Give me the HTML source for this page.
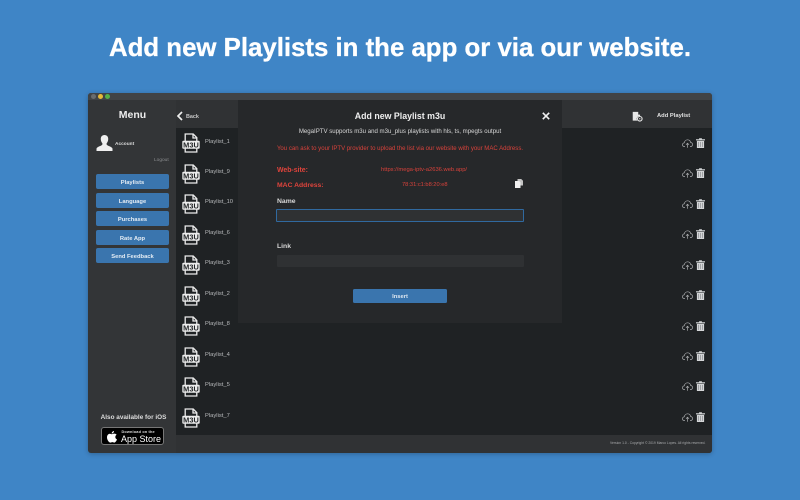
<!DOCTYPE html>
<html><head><meta charset="utf-8">
<style>
html,body{margin:0;padding:0}
body{width:800px;height:500px;overflow:hidden;background:#3f85c6;position:relative;font-family:"Liberation Sans",sans-serif;color:#e6e6e6}
div,svg{position:absolute}
.t{white-space:nowrap;line-height:1}
.btn{left:96px;width:73px;height:15px;background:#3a75ae;border-radius:2px;color:#e4ecf4;font-size:5.800px;font-weight:bold;text-align:center;line-height:18px}
.pl{left:205px;font-size:5.800px;color:#b8babc;white-space:nowrap;line-height:1}
</style></head><body>
<svg width="0" height="0" style="position:absolute"><defs>
<symbol id="m3u" viewBox="0 0 18 20"><path d="M3.200 8V1h8l3.600 3.600V8M11 1v4h3.800M3.200 15.500V19h11.600v-3.500" fill="none" stroke="#ececec" stroke-width="1.300"/><rect x="0.300" y="7.800" width="17.400" height="8" rx="1" fill="#ececec"/><text x="1.200" y="14.500" font-family="Liberation Sans" font-size="7" font-weight="bold" textLength="15.600" lengthAdjust="spacingAndGlyphs" fill="#1f2224">M3U</text></symbol>
<symbol id="cloud" viewBox="0 0 11 9"><path d="M3 7.500H2.400C1.200 7.500.5 6.600.5 5.600c0-1 .8-1.800 1.800-1.800C2.600 2 4 .8 5.600.8c1.600 0 2.800 1.100 3 2.700 1 .1 1.900.9 1.900 2 0 1.100-.8 2-2 2H8" fill="none" stroke="#aeb0b2" stroke-width=".7"/><path d="M5.500 8.800V4.300M4 5.700l1.500-1.500L7 5.700" fill="none" stroke="#aeb0b2" stroke-width=".7"/></symbol>
<symbol id="trash" viewBox="0 0 9 10"><path d="M0 1.300h9v1.100H0zM3.100 1.300V.2h2.800v1.100z" fill="#d4d6d8"/><path d="M.9 2.900h7.200V10H.9z" fill="#d4d6d8"/><path d="M2.600 3.900v5M4.500 3.900v5M6.400 3.900v5" stroke="#6a6d70" stroke-width=".5"/></symbol>
</defs></svg>

<div class="t" style="left:0;width:800px;top:36px;text-align:center;font-size:25.800px;font-weight:bold;color:#fff;-webkit-text-stroke:.3px #fff">Add new Playlists in the app or via our website.</div>

<!-- window -->
<div style="left:88px;top:93px;width:624px;height:360px;background:#333537;border-radius:3px;overflow:hidden;box-shadow:0 1px 5px rgba(0,0,0,.25)">
  <div style="left:0;top:0;width:624px;height:7px;background:#414345"></div>
  <div style="left:2.500px;top:1px;width:5px;height:5px;border-radius:50%;background:#6a6c6e"></div>
  <div style="left:9.500px;top:1px;width:5px;height:5px;border-radius:50%;background:#e6b93a"></div>
  <div style="left:17.200px;top:1px;width:5px;height:5px;border-radius:50%;background:#55b048"></div>
  <div style="left:88px;top:7px;width:536px;height:28px;background:#303234"></div>
  <div style="left:88px;top:35px;width:536px;height:307px;background:#1f2224"></div>
  <div style="left:88px;top:342px;width:536px;height:18px;background:#303234"></div>
</div>

<div class="t" style="left:96px;width:73px;top:110px;text-align:center;font-size:10.500px;font-weight:bold;color:#eee">Menu</div>

<svg style="left:96px;top:135px" width="17" height="16" viewBox="0 0 17 16"><path d="M8.500 0C6 0 4.600 1.800 4.800 4.400c.1 1.700.8 3 1.500 3.900.3.600.2 1.400-.4 1.800C4 11.300 1 11.900.5 13.600V16h16v-2.400c-.5-1.700-3.500-2.300-5.400-3.500-.6-.4-.7-1.200-.4-1.800.7-.9 1.400-2.200 1.500-3.900C12.400 1.800 11 0 8.500 0z" fill="#f0f0f0"/></svg>
<div class="t" style="left:115px;top:142.500px;font-size:4.800px;font-weight:bold;color:#ddd">Account</div>
<div class="t" style="left:154px;top:159px;font-size:4.800px;color:#8b8d8f">Logout</div>

<div class="btn" style="top:174px">Playlists</div>
<div class="btn" style="top:192.500px">Language</div>
<div class="btn" style="top:211px">Purchases</div>
<div class="btn" style="top:229.500px">Rate App</div>
<div class="btn" style="top:248px">Send Feedback</div>

<div class="t" style="left:96px;width:75px;top:415px;text-align:center;font-size:6.400px;font-weight:bold;color:#ddd">Also available for iOS</div>
<div style="left:101px;top:427px;width:63px;height:18px;box-sizing:border-box;background:#000;border:.5px solid #777;border-radius:3px"></div>
<svg style="left:107px;top:430.500px" width="10" height="12" viewBox="0 0 10 12"><path d="M7 0c.1 1.300-1.100 2.600-2.300 2.500C4.600 1.300 5.800.1 7 0zM4.800 3.200c.6 0 1.300-.6 2.500-.6.800 0 1.800.4 2.300 1.200-1.900 1.200-1.600 3.800.4 4.600-.5 1.400-1.600 3.200-2.700 3.200-.7 0-1-.5-1.900-.5s-1.300.5-2 .5C2 11.600 0 9 0 6.400c0-2.300 1.400-3.700 2.800-3.700.9 0 1.500.5 2 .5z" fill="#fff"/></svg>
<div class="t" style="left:121.500px;top:430.500px;font-size:3.800px;font-weight:bold;color:#ddd;letter-spacing:.18px">Download on the</div>
<div class="t" style="left:121px;top:435px;font-size:9px;color:#fff">App Store</div>

<!-- header -->
<svg style="left:176px;top:111px" width="8" height="10" viewBox="0 0 8 10"><path d="M6 1L2 5l4 4" fill="none" stroke="#eee" stroke-width="1.700"/></svg>
<div class="t" style="left:186px;top:114.500px;font-size:5.400px;font-weight:bold;color:#c8c8c8">Back</div>

<svg style="left:631.500px;top:110.500px" width="11" height="11" viewBox="0 0 12 12"><path d="M.8 1h6v3h2v1.500a3 3 0 00-2.800 5H.8z" fill="#e8e8e8"/><circle cx="8.500" cy="8.500" r="2.500" fill="none" stroke="#e8e8e8" stroke-width="1.200"/><circle cx="8.500" cy="8.500" r=".7" fill="#e8e8e8"/></svg>
<div class="t" style="left:657px;top:113.500px;font-size:5.800px;font-weight:bold;color:#e0e0e0">Add Playlist</div>

<!-- playlist rows -->
<svg style="left:182px;top:133px" width="18" height="20"><use href="#m3u"/></svg>
<svg style="left:182px;top:164px" width="18" height="20"><use href="#m3u"/></svg>
<svg style="left:182px;top:194px" width="18" height="20"><use href="#m3u"/></svg>
<svg style="left:182px;top:225px" width="18" height="20"><use href="#m3u"/></svg>
<svg style="left:182px;top:255px" width="18" height="20"><use href="#m3u"/></svg>
<svg style="left:182px;top:286px" width="18" height="20"><use href="#m3u"/></svg>
<svg style="left:182px;top:316px" width="18" height="20"><use href="#m3u"/></svg>
<svg style="left:182px;top:347px" width="18" height="20"><use href="#m3u"/></svg>
<svg style="left:182px;top:377px" width="18" height="20"><use href="#m3u"/></svg>
<svg style="left:182px;top:408px" width="18" height="20"><use href="#m3u"/></svg>

<div class="pl" style="top:139.500px">Playlist_1</div>
<div class="pl" style="top:170px">Playlist_9</div>
<div class="pl" style="top:200.400px">Playlist_10</div>
<div class="pl" style="top:230.800px">Playlist_6</div>
<div class="pl" style="top:261.300px">Playlist_3</div>
<div class="pl" style="top:291.700px">Playlist_2</div>
<div class="pl" style="top:322.100px">Playlist_8</div>
<div class="pl" style="top:352.600px">Playlist_4</div>
<div class="pl" style="top:383px">Playlist_5</div>
<div class="pl" style="top:413.500px">Playlist_7</div>

<svg style="left:682px;top:138.500px" width="11" height="9"><use href="#cloud"/></svg><svg style="left:696px;top:138px" width="9" height="10"><use href="#trash"/></svg>
<svg style="left:682px;top:168.500px" width="11" height="9"><use href="#cloud"/></svg><svg style="left:696px;top:168px" width="9" height="10"><use href="#trash"/></svg>
<svg style="left:682px;top:199.500px" width="11" height="9"><use href="#cloud"/></svg><svg style="left:696px;top:199px" width="9" height="10"><use href="#trash"/></svg>
<svg style="left:682px;top:229.500px" width="11" height="9"><use href="#cloud"/></svg><svg style="left:696px;top:229px" width="9" height="10"><use href="#trash"/></svg>
<svg style="left:682px;top:260.500px" width="11" height="9"><use href="#cloud"/></svg><svg style="left:696px;top:260px" width="9" height="10"><use href="#trash"/></svg>
<svg style="left:682px;top:290.500px" width="11" height="9"><use href="#cloud"/></svg><svg style="left:696px;top:290px" width="9" height="10"><use href="#trash"/></svg>
<svg style="left:682px;top:321.500px" width="11" height="9"><use href="#cloud"/></svg><svg style="left:696px;top:321px" width="9" height="10"><use href="#trash"/></svg>
<svg style="left:682px;top:351.500px" width="11" height="9"><use href="#cloud"/></svg><svg style="left:696px;top:351px" width="9" height="10"><use href="#trash"/></svg>
<svg style="left:682px;top:381.500px" width="11" height="9"><use href="#cloud"/></svg><svg style="left:696px;top:381px" width="9" height="10"><use href="#trash"/></svg>
<svg style="left:682px;top:412.500px" width="11" height="9"><use href="#cloud"/></svg><svg style="left:696px;top:412px" width="9" height="10"><use href="#trash"/></svg>

<div class="t" style="left:610px;top:442px;font-size:3.350px;color:#a8aaac">Version 1.0 - Copyright © 2019 Marco Lopes. All rights reserved.</div>

<!-- modal -->
<div style="left:238px;top:100px;width:324px;height:223px;background:#26282a"></div>
<div class="t" style="left:238px;width:324px;top:111.500px;text-align:center;font-size:8.800px;font-weight:bold;color:#eee">Add new Playlist m3u</div>
<svg style="left:542px;top:111.500px" width="8" height="8" viewBox="0 0 8 8"><path d="M.8.800l6.400 6.400M7.200.800L.8 7.200" stroke="#f2f2f2" stroke-width="1.600"/></svg>
<div class="t" style="left:238px;width:324px;top:129px;text-align:center;font-size:6.090px;color:#d8d8d8">MegaIPTV supports m3u and m3u_plus playlists with hls, ts, mpegts output</div>
<div class="t" style="left:238px;width:324px;top:146px;text-align:center;font-size:6.070px;color:#d8423b">You can ask to your IPTV provider to upload the list via our website with your MAC Address.</div>
<div class="t" style="left:277px;top:167.500px;font-size:6.900px;font-weight:bold;color:#e0443c">Web-site:</div>
<div class="t" style="left:381px;top:167.500px;font-size:5.800px;color:#d8423b">https://mega-iptv-a2636.web.app/</div>
<div class="t" style="left:277px;top:182.500px;font-size:6.800px;font-weight:bold;color:#e0443c">MAC Address:</div>
<div class="t" style="left:402px;top:182.500px;font-size:5.700px;color:#d8423b">78:31:c1:b8:20:e8</div>
<svg style="left:515px;top:179px" width="8" height="9" viewBox="0 0 8 9"><path d="M2.500 0H6.200L8 1.800V6.500H2.500z" fill="#c4c4c4"/><path d="M0 2h4.200L5.500 3.300V9H0z" fill="#f0f0f0"/></svg>

<div class="t" style="left:277px;top:198.500px;font-size:6.800px;color:#d8d8d8;font-weight:bold">Name</div>
<div style="left:276px;top:208.500px;width:248px;height:13px;box-sizing:border-box;background:#2f3133;border:1px solid #30699f;border-radius:1px"></div>
<div class="t" style="left:277px;top:243.500px;font-size:6.800px;color:#d8d8d8;font-weight:bold">Link</div>
<div style="left:277px;top:255px;width:246.500px;height:11.500px;background:#2f3133;border-radius:1px"></div>
<div style="left:353px;top:289px;width:94px;height:14px;background:#3a75ae;border-radius:1.500px;color:#dfe8f1;font-size:5.800px;font-weight:bold;text-align:center;line-height:16px">Insert</div>
</body></html>
